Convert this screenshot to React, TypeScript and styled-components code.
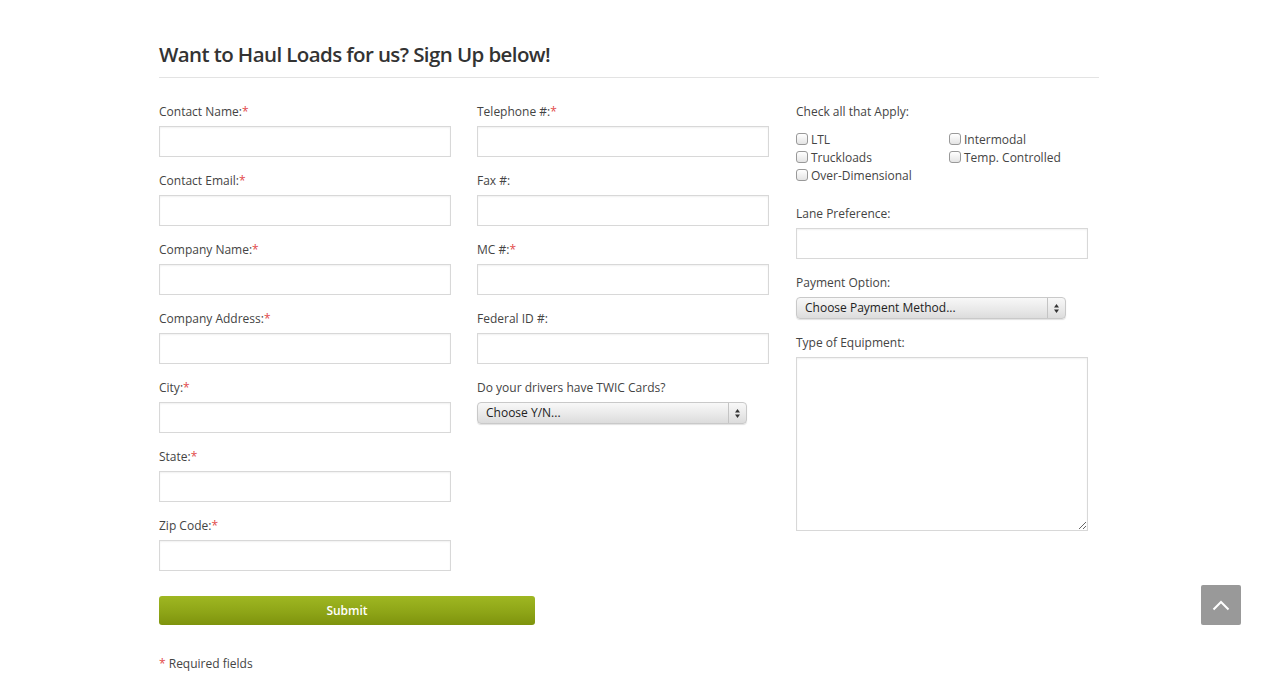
import React from 'react'
import styled, { createGlobalStyle } from 'styled-components'

const GlobalStyle = createGlobalStyle`
  body {
    margin: 0;
    background: #fff;
    font-family: 'Open Sans', 'Liberation Sans', Arial, sans-serif;
    color: #444;
  }
`

const Page = styled.div`
  box-sizing: border-box;
  width: 943px;
  padding: 40px 3px 12px 0;
  margin: 0 auto;
`

const Title = styled.h2`
  margin: 0;
  font-size: 20.5px;
  font-weight: 600;
  color: #333;
  line-height: 28px;
  padding-bottom: 9px;
  border-bottom: 1px solid #e3e3e3;
  letter-spacing: -0.6px;
`

const FormGrid = styled.div`
  display: grid;
  grid-template-columns: 318px 319px 1fr;
  margin-top: 25px;
`

const Column = styled.div`
  display: flex;
  flex-direction: column;
`

const Field = styled.div`
  display: flex;
  flex-direction: column;
  margin-bottom: 15px;
`

const Label = styled.label`
  font-size: 12px;
  line-height: 18px;
  color: #444;
  margin-bottom: 5px;
`

const Star = styled.span`
  color: #e24b4b;
`

const TextInput = styled.input`
  box-sizing: border-box;
  width: 292px;
  height: 31px;
  border: 1px solid #d8d8d8;
  box-shadow: inset 0 1px 2px rgba(0, 0, 0, 0.06);
  background: #fff;
  outline: none;
  padding: 4px 6px;
  font-family: inherit;
`

const TextArea = styled.textarea`
  box-sizing: border-box;
  width: 292px;
  height: 174px;
  border: 1px solid #d8d8d8;
  box-shadow: inset 0 1px 2px rgba(0, 0, 0, 0.06);
  outline: none;
  resize: both;
  font-family: inherit;
`

const SelectBox = styled.div`
  box-sizing: border-box;
  width: 270px;
  height: 22px;
  display: flex;
  align-items: stretch;
  border: 1px solid #c9c9c9;
  border-radius: 4px;
  background: linear-gradient(#f8f8f8, #e8e8e8 60%, #dcdcdc);
  box-shadow: 0 1px 1px rgba(0, 0, 0, 0.12);
  font-size: 12px;
  color: #222;
`

const SelectText = styled.span`
  flex: 1;
  padding-left: 8px;
  line-height: 20px;
`

const SelectArrow = styled.span`
  width: 17px;
  border-left: 1px solid #c4c4c4;
  display: flex;
  align-items: center;
  justify-content: center;
`

const CheckGrid = styled.div`
  display: grid;
  grid-template-columns: 153px 153px;
  margin-top: 4px;
  margin-bottom: 21px;
`

const CheckItem = styled.label`
  display: flex;
  align-items: center;
  height: 18px;
  font-size: 12px;
  color: #444;
`

const Box = styled.span`
  box-sizing: border-box;
  width: 12px;
  height: 12px;
  border: 1px solid #999;
  border-radius: 3px;
  background: linear-gradient(#fff, #e4e4e4);
  margin-right: 3px;
  margin-top: -1px;
`

const SubmitButton = styled.button`
  width: 376px;
  height: 29px;
  margin-top: 10px;
  border: none;
  border-radius: 3px;
  background: linear-gradient(#9fb722, #8ea517 55%, #7e930d);
  color: #fff;
  font-family: inherit;
  font-size: 12px;
  font-weight: 600;
  cursor: pointer;
  display: block;
`

const Note = styled.p`
  margin: 30px 0 0;
  font-size: 12px;
  line-height: 18px;
  color: #444;
`

const TopButton = styled.a`
  position: fixed;
  right: 20px;
  bottom: 67px;
  width: 40px;
  height: 40px;
  background: #999;
  border-radius: 2px;
  display: flex;
  align-items: center;
  justify-content: center;
`

const Arrows = () => (
  <svg width="7" height="11" viewBox="0 0 7 11">
    <path d="M3.5 1 L6 4.5 H1 Z" fill="#333" />
    <path d="M3.5 10 L6 6.5 H1 Z" fill="#333" />
  </svg>
)

function TextField({ label, required }: { label: string; required?: boolean }) {
  return (
    <Field>
      <Label>
        {label}
        {required && <Star>*</Star>}
      </Label>
      <TextInput type="text" />
    </Field>
  )
}

function FakeSelect({ label, placeholder }: { label: string; placeholder: string }) {
  return (
    <Field>
      <Label>{label}</Label>
      <SelectBox>
        <SelectText>{placeholder}</SelectText>
        <SelectArrow>
          <Arrows />
        </SelectArrow>
      </SelectBox>
    </Field>
  )
}

const checks = ['LTL', 'Intermodal', 'Truckloads', 'Temp. Controlled', 'Over-Dimensional']

export default function App() {
  return (
    <>
      <GlobalStyle />
      <Page>
        <Title>Want to Haul Loads for us? Sign Up below!</Title>
        <FormGrid>
          <Column>
            <TextField label="Contact Name:" required />
            <TextField label="Contact Email:" required />
            <TextField label="Company Name:" required />
            <TextField label="Company Address:" required />
            <TextField label="City:" required />
            <TextField label="State:" required />
            <TextField label="Zip Code:" required />
          </Column>
          <Column>
            <TextField label="Telephone #:" required />
            <TextField label="Fax #:" />
            <TextField label="MC #:" required />
            <TextField label="Federal ID #:" />
            <FakeSelect label="Do your drivers have TWIC Cards?" placeholder="Choose Y/N..." />
          </Column>
          <Column>
            <Label>Check all that Apply:</Label>
            <CheckGrid>
              {checks.map((c) => (
                <CheckItem key={c}>
                  <Box />
                  {c}
                </CheckItem>
              ))}
            </CheckGrid>
            <TextField label="Lane Preference:" />
            <FakeSelect label="Payment Option:" placeholder="Choose Payment Method..." />
            <Field>
              <Label>Type of Equipment:</Label>
              <TextArea />
            </Field>
          </Column>
        </FormGrid>
        <SubmitButton>Submit</SubmitButton>
        <Note>
          <Star>*</Star> Required fields
        </Note>
      </Page>
      <TopButton href="#">
        <svg width="18" height="11" viewBox="0 0 18 11">
          <path d="M1.5 9.5 L9 2 L16.5 9.5" fill="none" stroke="#fff" strokeWidth="2" />
        </svg>
      </TopButton>
    </>
  )
}
